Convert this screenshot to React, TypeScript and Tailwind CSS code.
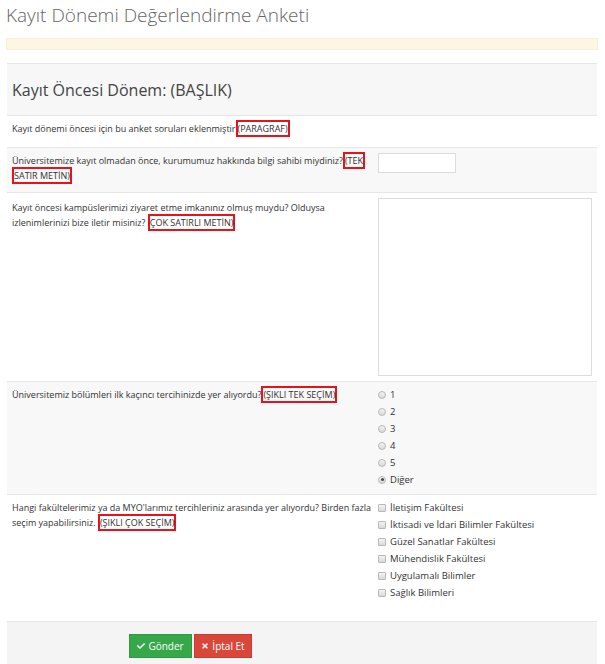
import React from "react";
import { FaCheck, FaTimes } from "react-icons/fa";

const box = "border-2 border-[#e3141b] [box-decoration-break:clone] [-webkit-box-decoration-break:clone]";

function Radio({ checked }: { checked?: boolean }) {
  return (
    <span className="inline-flex items-center justify-center w-[8px] h-[8px] rounded-full border border-[#b8b8b8] bg-gradient-to-b from-[#f4f4f4] to-[#d9d9d9] mr-[4px]">
      {checked && <span className="w-[3px] h-[3px] rounded-full bg-[#444]" />}
    </span>
  );
}

function Check() {
  return (
    <span className="inline-block w-[8px] h-[8px] rounded-[1px] border border-[#b8b8b8] bg-gradient-to-b from-[#f4f4f4] to-[#d9d9d9] mr-[4px]" />
  );
}

export default function App() {
  const radios = ["1", "2", "3", "4", "5", "Diğer"];
  const checks = [
    "İletişim Fakültesi",
    "İktisadi ve İdari Bilimler Fakültesi",
    "Güzel Sanatlar Fakültesi",
    "Mühendislik Fakültesi",
    "Uygulamalı Bilimler",
    "Sağlık Bilimleri",
  ];
  return (
    <div className="w-[605px] h-[664px] overflow-hidden bg-white font-['Open_Sans',sans-serif] text-[#333]">
      <h1 className="pl-[6px] pt-[2px] h-[38px] text-[19px] leading-[26px] font-light text-[#666]">
        Kayıt Dönemi Değerlendirme Anketi
      </h1>
      <div className="ml-[6px] mr-[7px] h-[12px] bg-[#fcf6e2] border border-[#f8f0d8]" />
      <div className="mt-[13px] ml-[7px] mr-[8px] border-t border-[#e6e6e6]">
        <div className="h-[52px] bg-[#f7f7f7] border-b border-[#e6e6e6] flex items-center pl-[5px] pt-[1px]">
          <h2 className="text-[16px] text-[#444]">Kayıt Öncesi Dönem: (BAŞLIK)</h2>
        </div>
        <div className="text-[9px] leading-[15px]">
          {/* Row 1 */}
          <div className="flex bg-white pt-[5px] pb-[11px] border-b border-[#e6e6e6]">
            <div className="w-[366px] pl-[5px] pr-[6px]">
              Kayıt dönemi öncesi için bu anket soruları eklenmiştir<span className={box}>(PARAGRAF)</span>
            </div>
          </div>
          {/* Row 2 */}
          <div className="flex bg-[#f8f8f8] pt-[5px] pb-[9px] border-b border-[#e6e6e6]">
            <div className="w-[366px] pl-[5px] pr-[4px]">
              Üniversitemize kayıt olmadan önce, kurumumuz hakkında bilgi sahibi miydiniz?<span className={box}>(TEK SATIR METİN)</span>
            </div>
            <div className="pl-[5px]">
              <div className="w-[78px] h-[20px] bg-white border border-[#dcdcdc]" />
            </div>
          </div>
          {/* Row 3 */}
          <div className="flex bg-white pt-[5px] pb-[5px] border-b border-[#e6e6e6]">
            <div className="w-[366px] pl-[5px] pr-[40px] pt-[2px]">
              Kayıt öncesi kampüslerimizi ziyaret etme imkanınız olmuş muydu? Olduysa izlenimlerinizi bize iletir misiniz? <span className={box}>ÇOK SATIRLI METİN)</span>
            </div>
            <div className="pl-[5px]">
              <div className="w-[214px] h-[178px] bg-white border border-[#dcdcdc]" />
            </div>
          </div>
          {/* Row 4 */}
          <div className="flex bg-[#f8f8f8] pt-[4px] pb-[6px] border-b border-[#e6e6e6]">
            <div className="w-[366px] pl-[5px] pr-[6px] pt-[1px]">
              Üniversitemiz bölümleri ilk kaçıncı tercihinizde yer alıyordu?<span className={box}>(ŞIKLI TEK SEÇİM)</span>
            </div>
            <div className="pl-[5px] flex flex-col">
              {radios.map((r, i) => (
                <div key={r} className="flex items-center h-[17px] text-[9.5px]">
                  <Radio checked={i === 5} />
                  <span>{r}</span>
                </div>
              ))}
            </div>
          </div>
          {/* Row 5 */}
          <div className="flex bg-white pt-[4px] pb-[20px]">
            <div className="w-[366px] pl-[5px] pr-0 pt-[1px]">
              <div className="w-[364px]">
                Hangi fakültelerimiz ya da MYO'larımız tercihleriniz arasında yer alıyordu? Birden fazla seçim yapabilirsiniz. <span className={box}>(ŞIKLI ÇOK SEÇİM)</span>
              </div>
            </div>
            <div className="pl-[5px] flex flex-col">
              {checks.map((c) => (
                <div key={c} className="flex items-center h-[17px] text-[9.5px]">
                  <Check />
                  <span>{c}</span>
                </div>
              ))}
            </div>
          </div>
        </div>
        {/* Footer */}
        <div className="bg-[#f4f4f4] border-t border-[#e6e6e6] pt-[12px] pb-[14px] pl-[122px] flex gap-[2px]">
          <button className="w-[63px] h-[24px] bg-[#37a849] border border-[#2f9a40] text-white text-[10px] flex items-center justify-center gap-[3px]">
            <FaCheck className="w-[8px] h-[8px]" />
            Gönder
          </button>
          <button className="w-[58px] h-[24px] bg-[#d9473a] border border-[#c93d31] text-white text-[10px] flex items-center justify-center gap-[3px]">
            <FaTimes className="w-[8px] h-[8px]" />
            İptal Et
          </button>
        </div>
      </div>
    </div>
  );
}
